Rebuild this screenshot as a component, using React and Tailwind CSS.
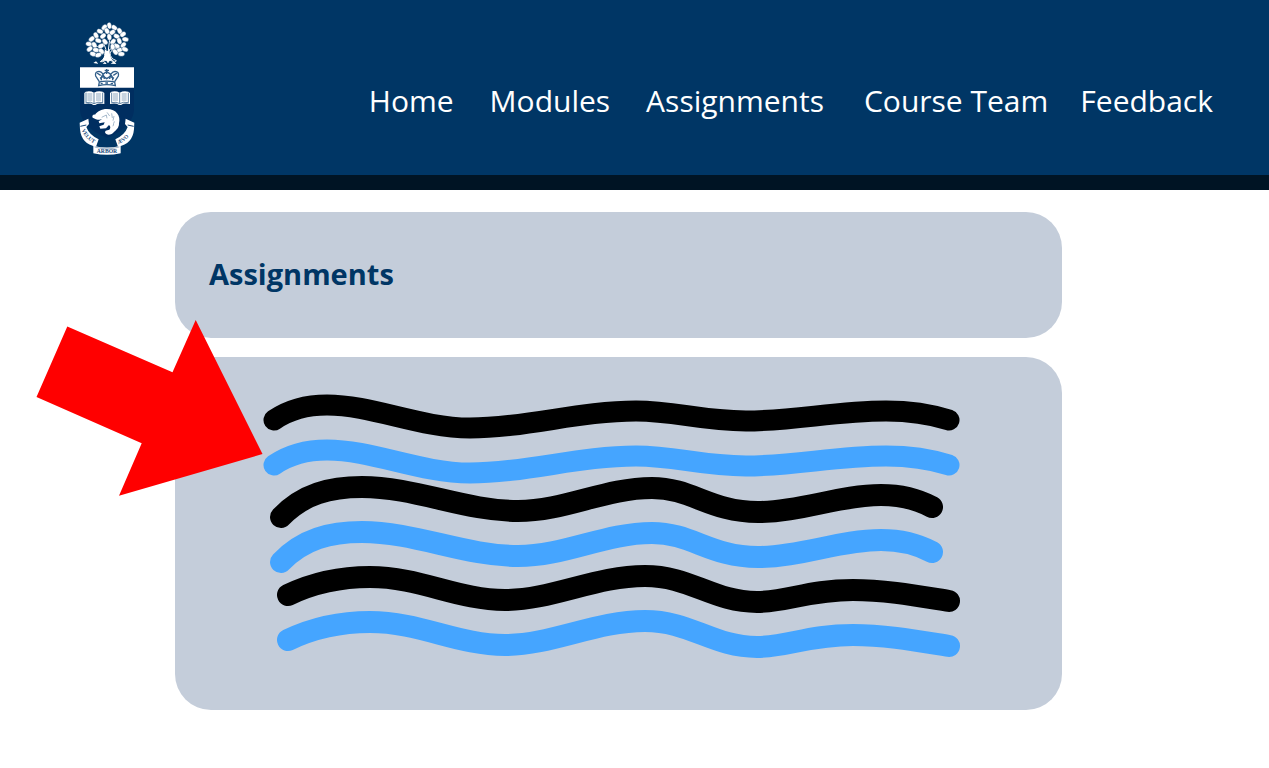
const navLinks = [
  { label: "Home", space: "ml-0" },
  { label: "Modules", space: "ml-9" },
  { label: "Assignments", space: "ml-9" },
  { label: "Course Team", space: "ml-10" },
  { label: "Feedback", space: "ml-8" },
];

// x, y, rotation of each leaf in the crown of the tree
const leaves = [
  [118, 29, 80], [103, 34, -50], [133, 35, 40], [90, 46, 20], [111, 45, 60], [127, 49, -40],
  [149, 45, 60], [78, 58, 60], [99, 60, -40], [118, 63, 80], [140, 61, 30], [159, 55, -40],
  [65, 69, -40], [85, 74, 20], [105, 77, 50], [129, 77, -50], [148, 75, 70], [166, 70, 10],
  [57, 84, 10], [73, 87, 60], [93, 90, -30], [140, 90, 20], [160, 87, -50], [59, 99, -40],
  [78, 102, 10], [94, 106, 50], [128, 93, 80], [148, 103, -30], [165, 100, 20], [69, 114, 20],
  [85, 117, -20], [136, 108, 50], [154, 114, 0],
];

const waves = [
  { y: 0, color: "stroke-black", d: "M274 420C290 409 308 405 327 405C372 405 420 428 470 428C525 428 580 411 636 411C676 411 700 421 746 421C795 421 835 411 886 411C908 411 930 414 949 420" },
  { y: 45, color: "stroke-[#45a5ff]", d: "M274 420C290 409 308 405 327 405C372 405 420 428 470 428C525 428 580 411 636 411C676 411 700 421 746 421C795 421 835 411 886 411C908 411 930 414 949 420" },
  { y: 0, color: "stroke-black", d: "M281 517C303 494 330 487 362 487C415 487 465 511 518 511C565 511 605 488 652 488C692 488 710 512 758 512C800 512 840 495 881 495C900 495 917 499 932 507" },
  { y: 45, color: "stroke-[#45a5ff]", d: "M281 517C303 494 330 487 362 487C415 487 465 511 518 511C565 511 605 488 652 488C692 488 710 512 758 512C800 512 840 495 881 495C900 495 917 499 932 507" },
  { y: 0, color: "stroke-black", d: "M288 595C315 582 342 577 370 577C420 577 458 600 505 600C552 600 596 576 645 576C690 576 713 602 757 602C788 602 808 590 853 590C886 590 918 596 949 601" },
  { y: 45, color: "stroke-[#45a5ff]", d: "M288 595C315 582 342 577 370 577C420 577 458 600 505 600C552 600 596 576 645 576C690 576 713 602 757 602C788 602 808 590 853 590C886 590 918 596 949 601" },
];

function Book({ x }) {
  return (
    <g transform={`translate(${x} 226)`}>
      <path d="M0 5L4 1Q18-3 29 4Q41-3 55 1L60 5V38Q42 34 33 41H27Q18 34 0 38Z" fill="#fff" />
      <path d="M4 34Q20 30 29 37Q39 30 56 34M29 5V36M5 4V33M55 4V33" fill="none" stroke="#174879" strokeWidth="2" />
      <path d="M9 8H24M9 14H24M9 20H24M9 26H24M35 8H50M35 14H50M35 20H50M35 26H50" stroke="#587da0" strokeWidth="2" />
    </g>
  );
}

function Crest() {
  return (
    <svg viewBox="24 12 174 408" className="h-[136px] w-[58px]" role="img" aria-label="University crest">
      <path d="M77 90Q100 95 104 112Q107 126 91 137L98 137L109 132L114 140L119 132L135 139L139 134Q120 127 120 111Q124 99 149 95M108 101L99 76M115 103L119 70M117 104L137 82M99 102L82 102" fill="none" stroke="#fff" strokeWidth="3" />
      {leaves.map(([x, y, r]) => (
        <ellipse key={`${x}-${y}`} cx={x} cy={y} rx="10" ry="7" fill="#fff" stroke="#003665" strokeWidth="1" transform={`rotate(${r} ${x} ${y})`} />
      ))}
      <path d="M104 100L112 105L119 99Q117 125 132 136L120 132L114 139L108 132L94 137Q108 123 104 100Z" fill="#fff" />
      <path d="M70 141L78 136L85 143ZM98 143L105 137L110 144ZM122 143L132 136L139 144Z" fill="#fff" />

      <path d="M30 152H192V278C192 320 150 350 111 365C72 350 30 320 30 278Z" fill="#002e60" />
      <path d="M30 154H192V215H30Z" fill="#fff" />
      <g fill="none" stroke="#315e89" strokeWidth="4">
        <path d="M86 209Q110 203 136 209L134 198Q110 193 88 198Z" />
        <path d="M88 197L77 180Q74 167 87 166Q101 168 103 189M134 197L145 180Q148 167 135 166Q121 168 119 189M94 193Q91 177 110 167Q130 177 128 193" />
        <path d="M110 159V174M104 163H117M81 171L92 178M141 171L130 178M90 187L100 181L110 188L121 181L132 187" />
      </g>
      <path d="M92 203H98M106 201H114M122 203H129" stroke="#315e89" strokeWidth="4" />
      <Book x={43} />
      <Book x={120} />

      <path d="M75 296C82 287 94 279 111 279C139 279 153 300 147 322C144 338 132 347 115 346C122 338 123 331 117 327L108 337L91 338L88 331L101 326L104 319L88 322L86 316L96 310C86 313 77 310 68 305C65 300 69 295 75 296Z" fill="#fff" />
      <path d="M95 304L109 297L111 307M111 289L119 300M125 292L127 306M132 300L129 314M133 316L129 331" fill="none" stroke="#7895b1" strokeWidth="2" />
      <path d="M133 321L146 321C149 333 139 342 129 351C121 359 107 357 105 349C106 341 116 345 126 337C131 332 134 327 133 321Z" fill="#fff" />

      <path d="M29 320L55 308L57 324L49 333Q57 356 86 370L78 392Q34 384 30 340Z" fill="#fff" />
      <path d="M193 320L167 308L165 324L173 333Q165 356 136 370L144 392Q188 384 192 340Z" fill="#fff" />
      <path d="M31 331L49 327M191 331L173 327" stroke="#174879" strokeWidth="3" />
      <path d="M70 389Q111 400 152 389V412Q111 421 70 412Z" fill="#fff" />
      <path d="M74 393Q111 404 148 393" fill="none" stroke="#7895b1" strokeWidth="2" />
      <path id="velut" d="M35 342Q45 370 78 385" fill="none" />
      <path id="aevo" d="M145 385Q178 369 186 342" fill="none" />
      <g fill="#174879" fontFamily="Liberation Serif, serif" fontSize="16" fontWeight="700">
        <text><textPath href="#velut">VELUT</textPath></text>
        <text><textPath href="#aevo">ÆVO</textPath></text>
        <text x="111" y="412" fontSize="17" textAnchor="middle">ARBOR</text>
      </g>
    </svg>
  );
}

export default function App() {
  return (
    <div className="min-h-screen bg-white font-['Open_Sans',sans-serif]">
      <header className="flex h-[190px] items-start justify-between border-b-[15px] border-[#001424] bg-[#003665] pt-5 pr-14 pl-[78px]">
        <Crest />
        <nav aria-label="Main" className="flex pt-[61px] text-[30px] leading-10 text-white">
          {navLinks.map(({ label, space }) => (
            <a key={label} href={`#${label.toLowerCase().replace(" ", "-")}`} className={`${space} whitespace-nowrap`}>
              {label}
            </a>
          ))}
        </nav>
      </header>

      <main className="relative flex flex-col gap-[19px] pt-[22px] pr-[207px] pb-14 pl-[175px]">
        <section className="rounded-[36px] bg-[#c4cdda] px-[34px] pt-[42px] pb-11">
          <h1 className="text-[29px] leading-10 font-bold text-[#003665]">Assignments</h1>
        </section>

        <section aria-label="Assignment details" className="overflow-hidden rounded-[36px] bg-[#c4cdda]">
          <svg viewBox="175 357 887 353" className="block h-auto w-full" aria-hidden="true">
            {waves.map(({ y, color, d }, i) => (
              <path key={i} d={d} transform={`translate(0 ${y})`} className={color} fill="none" strokeWidth={i < 2 ? 21 : 22} strokeLinecap="round" />
            ))}
          </svg>
        </section>

        <svg viewBox="36 320 227 176" className="absolute top-[130px] left-9 h-[176px] w-[227px]" aria-hidden="true">
          <path d="M67.3 326.5L172.5 372.3L195.7 320L262.5 454L119 495.7L141.7 443.2L36.5 397Z" fill="#f00" />
        </svg>
      </main>
    </div>
  );
}
